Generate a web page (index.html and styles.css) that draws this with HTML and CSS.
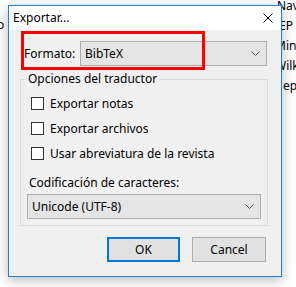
FILE: index.html
```html
<!DOCTYPE html>
<html>
<head>
<meta charset="utf-8">
<link rel="stylesheet" href="styles.css">
</head>
<body>
<div class="desk">
  <div class="bg-left">o</div>
  <div class="bg-right">
    <div class="bg-line l1">Nav</div>
    <div class="bg-line">IEP</div>
    <div class="bg-line">Min</div>
    <div class="bg-line">Wilk</div>
    <div class="bg-line l5">ep</div>
  </div>
  <div class="dialog">
    <div class="titlebar">
      <span class="title">Exportar...</span>
      <svg class="close" width="10" height="10" viewBox="0 0 10 10"><path d="M0.5 0.5 L9.5 9.5 M9.5 0.5 L0.5 9.5" stroke="#000" stroke-width="1" fill="none"/></svg>
    </div>
    <div class="content">
      <div class="format-row">
        <span class="format-label">Formato:</span>
        <div class="select select-format">
          <span>BibTeX</span>
          <svg class="chev" width="9" height="5" viewBox="0 0 9 5"><path d="M0.5 0.5 L4.5 4.5 L8.5 0.5" stroke="#555" stroke-width="1" fill="none"/></svg>
        </div>
      </div>
      <div class="group">
        <div class="legend">Opciones del traductor</div>
        <div class="check"><span class="box"></span><span>Exportar notas</span></div>
        <div class="check"><span class="box"></span><span>Exportar archivos</span></div>
        <div class="check"><span class="box"></span><span>Usar abreviatura de la revista</span></div>
        <div class="enc-label">Codificación de caracteres:</div>
        <div class="select select-enc">
          <span>Unicode (UTF-8)</span>
          <svg class="chev" width="9" height="5" viewBox="0 0 9 5"><path d="M0.5 0.5 L4.5 4.5 L8.5 0.5" stroke="#555" stroke-width="1" fill="none"/></svg>
        </div>
      </div>
      <div class="buttons">
        <div class="btn btn-default">OK</div>
        <div class="btn">Cancel</div>
      </div>
      <div class="highlight"></div>
    </div>
  </div>
</div>
</body>
</html>
```
FILE: styles.css
```css
* { box-sizing: border-box; }
html, body { margin: 0; padding: 0; }
body {
  width: 296px;
  height: 287px;
  overflow: hidden;
  background: #ffffff;
  font-family: "Noto Sans", "Open Sans", sans-serif;
  font-size: 12px;
  color: #000;
}
.desk { position: relative; width: 296px; height: 287px; }
.bg-left {
  position: absolute;
  left: -3px;
  top: 17px;
  line-height: 16px;
}
.bg-right {
  position: absolute;
  left: 275px;
  top: -4px;
  display: flex;
  flex-direction: column;
}
.bg-line { height: 20px; line-height: 20px; white-space: nowrap; }
.l1 { padding-left: 2px; }
.l5 { padding-left: 8px; }
.dialog {
  position: absolute;
  left: 8px;
  top: 5px;
  width: 274px;
  height: 272px;
  border: 1px solid #1883d7;
  background: #f0f0f0;
  box-shadow: 0 3px 12px rgba(0,0,0,0.28);
  display: flex;
  flex-direction: column;
}
.titlebar {
  height: 24px;
  background: #ffffff;
  display: flex;
  align-items: center;
  justify-content: space-between;
  padding-left: 4px;
  padding-right: 8px;
  flex-shrink: 0;
}
.title { line-height: 16px; }
.close { display: block; }
.content {
  position: relative;
  flex: 1;
  display: flex;
  flex-direction: column;
  padding-top: 11px;
}
.format-row {
  display: flex;
  align-items: center;
  padding-left: 15px;
}
.format-label { width: 56px; }
.select {
  height: 25px;
  background: #e5e5e5;
  border: 1px solid #adadad;
  display: flex;
  align-items: center;
  justify-content: space-between;
  padding-left: 4px;
  padding-right: 6px;
}
.select-format { width: 187px; }
.chev { display: block; }
.group {
  position: relative;
  margin-top: 13px;
  margin-left: 11px;
  width: 248px;
  height: 147px;
  border: 1px solid #dcdcdc;
  padding: 11px 6px 0 6px;
  display: flex;
  flex-direction: column;
}
.legend {
  position: absolute;
  left: 5px;
  top: -9px;
  padding: 0 2px;
  line-height: 16px;
  background: #f0f0f0;
}
.check {
  height: 25px;
  display: flex;
  align-items: center;
  padding-left: 4px;
}
.box {
  width: 13px;
  height: 13px;
  border: 1px solid #333;
  background: #fff;
  margin-right: 6px;
  flex-shrink: 0;
}
.enc-label {
  margin-top: 9px;
  line-height: 16px;
  padding-left: 2px;
}
.select-enc { margin-top: 3px; width: 234px; }
.buttons {
  margin-top: 11px;
  display: flex;
  justify-content: flex-end;
  gap: 12px;
  padding-right: 15px;
}
.btn {
  width: 74px;
  height: 25px;
  background: #e1e1e1;
  border: 1px solid #adadad;
  display: flex;
  align-items: center;
  justify-content: center;
}
.btn-default { border: 2px solid #0078d7; width: 73px; }
.highlight {
  position: absolute;
  left: 12px;
  top: 1px;
  width: 184px;
  height: 39px;
  border: 3px solid #ff0000;
}
```
